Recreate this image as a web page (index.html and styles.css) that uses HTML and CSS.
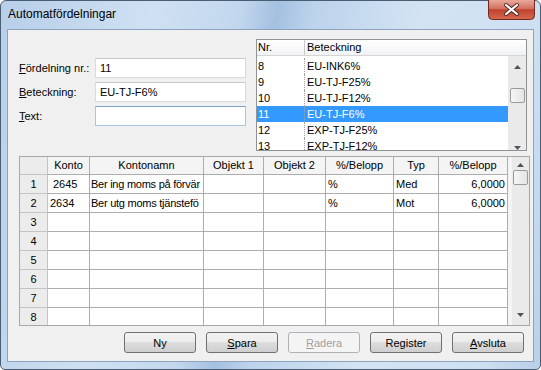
FILE: index.html
```html
<!DOCTYPE html>
<html lang="sv">
<head>
  <meta charset="UTF-8" />
  <title>Automatfördelningar</title>
  <link rel="stylesheet" href="styles.css">
</head>
<body>

  <div class="window">
    <div class="titlebar">
      <span class="title">Automatfördelningar</span>
      <div class="close-btn">
        <svg width="47" height="20" viewBox="0 0 47 20">
          <defs>
            <linearGradient id="red" x1="0" y1="0" x2="0" y2="1">
              <stop offset="0" stop-color="#e9a99b"/>
              <stop offset="0.45" stop-color="#d2705e"/>
              <stop offset="0.5" stop-color="#c0412c"/>
              <stop offset="1" stop-color="#d66a50"/>
            </linearGradient>
          </defs>
          <path d="M0.5 0 V15.5 Q0.5 19.5 4.5 19.5 H42.5 Q46.5 19.5 46.5 15.5 V0" fill="url(#red)" stroke="#6f2a20"/>
          <path d="M18 5 L29 14 M29 5 L18 14" stroke="#4a2420" stroke-width="4" stroke-linecap="round"/>
          <path d="M18 5 L29 14 M29 5 L18 14" stroke="#ffffff" stroke-width="2.2" stroke-linecap="round"/>
        </svg>
      </div>
    </div>

    <div class="client">
      <div class="top">
        <div class="form">
          <div class="field">
            <label><u>F</u>ördelning nr.:</label>
            <div class="input ro">11</div>
          </div>
          <div class="field">
            <label><u>B</u>eteckning:</label>
            <div class="input ro">EU-TJ-F6%</div>
          </div>
          <div class="field">
            <label><u>T</u>ext:</label>
            <div class="input focus"></div>
          </div>
        </div>

        <div class="list">
          <div class="list-head">
            <span class="col-nr">Nr.</span>
            <span class="col-bet">Beteckning</span>
          </div>
          <div class="list-body">
            <div class="list-rows">
              <div class="list-row"><span class="col-nr">8</span><span class="col-bet">EU-INK6%</span></div>
              <div class="list-row"><span class="col-nr">9</span><span class="col-bet">EU-TJ-F25%</span></div>
              <div class="list-row"><span class="col-nr">10</span><span class="col-bet">EU-TJ-F12%</span></div>
              <div class="list-row selected"><span class="col-nr">11</span><span class="col-bet">EU-TJ-F6%</span></div>
              <div class="list-row"><span class="col-nr">12</span><span class="col-bet">EXP-TJ-F25%</span></div>
              <div class="list-row"><span class="col-nr">13</span><span class="col-bet">EXP-TJ-F12%</span></div>
            </div>
            <div class="vscroll list-scroll">
              <svg class="arrow" width="7" height="4" viewBox="0 0 7 4"><polygon points="3.5,0 7,4 0,4" fill="#555"/></svg>
              <div class="thumb"></div>
              <svg class="arrow down" width="7" height="4" viewBox="0 0 7 4"><polygon points="0,0 7,0 3.5,4" fill="#555"/></svg>
            </div>
          </div>
        </div>
      </div>

      <div class="grid">
        <div class="grid-table">
          <div class="cell rh"></div>
          <div class="cell hd">Konto</div>
          <div class="cell hd">Kontonamn</div>
          <div class="cell hd">Objekt 1</div>
          <div class="cell hd">Objekt 2</div>
          <div class="cell hd">%/Belopp</div>
          <div class="cell hd">Typ</div>
          <div class="cell hd">%/Belopp</div>

          <div class="cell rh">1</div>
          <div class="cell indent">2645</div>
          <div class="cell name">Ber ing moms på förvär</div>
          <div class="cell"></div>
          <div class="cell"></div>
          <div class="cell">%</div>
          <div class="cell">Med</div>
          <div class="cell num">6,0000</div>

          <div class="cell rh">2</div>
          <div class="cell">2634</div>
          <div class="cell name">Ber utg moms tjänstefö</div>
          <div class="cell"></div>
          <div class="cell"></div>
          <div class="cell">%</div>
          <div class="cell">Mot</div>
          <div class="cell num">6,0000</div>

          <div class="cell rh">3</div><div class="cell"></div><div class="cell"></div><div class="cell"></div><div class="cell"></div><div class="cell"></div><div class="cell"></div><div class="cell"></div>
          <div class="cell rh">4</div><div class="cell"></div><div class="cell"></div><div class="cell"></div><div class="cell"></div><div class="cell"></div><div class="cell"></div><div class="cell"></div>
          <div class="cell rh">5</div><div class="cell"></div><div class="cell"></div><div class="cell"></div><div class="cell"></div><div class="cell"></div><div class="cell"></div><div class="cell"></div>
          <div class="cell rh">6</div><div class="cell"></div><div class="cell"></div><div class="cell"></div><div class="cell"></div><div class="cell"></div><div class="cell"></div><div class="cell"></div>
          <div class="cell rh">7</div><div class="cell"></div><div class="cell"></div><div class="cell"></div><div class="cell"></div><div class="cell"></div><div class="cell"></div><div class="cell"></div>
          <div class="cell rh">8</div><div class="cell"></div><div class="cell"></div><div class="cell"></div><div class="cell"></div><div class="cell"></div><div class="cell"></div><div class="cell"></div>
        </div>
        <div class="filler"></div>
        <div class="vscroll grid-scroll">
          <svg class="arrow" width="7" height="4" viewBox="0 0 7 4"><polygon points="3.5,0 7,4 0,4" fill="#555"/></svg>
          <div class="thumb"></div>
          <svg class="arrow down" width="7" height="4" viewBox="0 0 7 4"><polygon points="0,0 7,0 3.5,4" fill="#555"/></svg>
        </div>
      </div>

      <div class="buttons">
        <button class="btn">Ny</button>
        <button class="btn"><u>S</u>para</button>
        <button class="btn" disabled><u>R</u>adera</button>
        <button class="btn">Re<u>g</u>ister</button>
        <button class="btn"><u>A</u>vsluta</button>
      </div>
    </div>
  </div>

</body>
</html>
```

FILE: styles.css
```css
* {
  box-sizing: border-box;
}

body {
  margin: 0;
  font-family: 'Liberation Sans', Arial, sans-serif;
  font-size: 11px;
  color: black;
  background: white;
}

.window {
  width: 541px;
  height: 370px;
  display: flex;
  flex-direction: column;
  padding: 0 6px 7px 6px;
  border: 1px solid #4b5d73;
  border-radius: 6px 6px 5px 5px;
  background: linear-gradient(100deg, #b7cfe9 0%, #cfe0f2 25%, #c2d7ee 40%, #a4c0e1 46%, #bcd3ec 52%, #d3e3f3 70%, #cde0f2 90%, #b9d0ea 100%);
}

.titlebar {
  height: 28px;
  display: flex;
  align-items: flex-start;
}

.title {
  font-size: 12px;
  padding-top: 6px;
  padding-left: 1px;
  color: black;
}

.close-btn {
  margin-left: auto;
  margin-top: -1px;
  margin-right: -1px;
  height: 20px;
}

.close-btn svg {
  display: block;
}

.client {
  flex: 1;
  background: #f0f0f0;
  border: 1px solid #8da3bd;
  padding: 9px 0 0 11px;
  display: flex;
  flex-direction: column;
}

.top {
  display: flex;
  height: 112px;
}

.form {
  padding-top: 19px;
  display: flex;
  flex-direction: column;
  gap: 4px;
}

.field {
  display: flex;
  align-items: center;
  height: 20px;
}

.field label {
  width: 76px;
}

.input {
  width: 151px;
  height: 20px;
  line-height: 18px;
  padding: 0 4px;
  background: white;
  border: 1px solid #dadada;
  border-top-color: #c8c8c8;
}

.input.focus {
  border: 1px solid #a9c6e1;
  border-top-color: #7ba2c9;
}

.list {
  margin-left: auto;
  margin-right: 6px;
  width: 271px;
  height: 112px;
  border: 1px solid #8e9399;
  background: white;
  display: flex;
  flex-direction: column;
  overflow: hidden;
}

.list-head {
  height: 16px;
  display: flex;
  background: linear-gradient(#ffffff, #f1f2f4);
  border-bottom: 1px solid #d5d5d5;
  line-height: 15px;
}

.list-head .col-bet {
  border-left: 1px solid #c9c9c9;
}

.col-nr {
  width: 47px;
  padding-left: 1px;
}

.col-bet {
  flex: 1;
  padding-left: 2px;
}

.list-body {
  flex: 1;
  display: flex;
}

.list-rows {
  flex: 1;
  padding-top: 2px;
}

.list-row {
  height: 16px;
  line-height: 16px;
  display: flex;
}

.list-row .col-bet {
  border-left: 1px dotted #a0a0a0;
}

.list-row.selected {
  background: #3399ff;
  color: white;
}

.vscroll {
  width: 18px;
  background: #eaeaea;
  display: flex;
  flex-direction: column;
  align-items: center;
}

.list-scroll {
  padding-top: 9px;
}

.vscroll .arrow {
  display: block;
}

.vscroll .arrow.down {
  margin-top: auto;
  margin-bottom: 4px;
}

.thumb {
  width: 15px;
  height: 15px;
  border: 1px solid #9a9a9a;
  border-radius: 2px;
  background: linear-gradient(to right, #f6f6f6, #e4e4e4);
}

.list-scroll .thumb {
  margin-top: 19px;
}

.grid {
  margin-top: 5px;
  width: 511px;
  height: 170px;
  border: 1px solid #a7a7a7;
  background: white;
  display: flex;
  overflow: hidden;
}

.grid-table {
  display: grid;
  grid-template-columns: 28px 42px 114px 60px 62px 68px 45px 69px;
  grid-template-rows: 18px;
  grid-auto-rows: 19px;
  flex: none;
}

.cell {
  border-right: 1px solid #adadad;
  border-bottom: 1px solid #adadad;
  padding: 0 2px;
  line-height: 18px;
  white-space: nowrap;
  overflow: hidden;
}

.cell.hd {
  background: #f4f4f4;
  text-align: center;
  line-height: 17px;
}

.cell.rh {
  background: #ececec;
  text-align: center;
  border-right-color: #c4c4c4;
  border-bottom-color: #c4c4c4;
}

.cell.indent {
  padding-left: 5px;
}

.cell.name {
  padding-left: 1px;
  padding-right: 0;
  letter-spacing: -0.25px;
}

.cell.num {
  text-align: right;
}

.filler {
  width: 4px;
  background: #f4f4f4;
}

.grid-scroll {
  width: 17px;
  padding-top: 6px;
}

.grid-scroll .thumb {
  margin-top: 3px;
}

.grid-scroll .arrow.down {
  margin-bottom: 8px;
}

.buttons {
  margin-top: 6px;
  padding-right: 9px;
  display: flex;
  justify-content: flex-end;
  gap: 10px;
}

.btn {
  width: 72px;
  height: 21px;
  font-family: 'Liberation Sans', Arial, sans-serif;
  font-size: 11px;
  color: black;
  border: 1px solid #707070;
  border-radius: 3px;
  background: linear-gradient(#f3f3f3 0%, #ebebeb 50%, #dddddd 50%, #cfcfcf 100%);
  padding: 0;
}

.btn:disabled {
  color: #a0a0a0;
  border-color: #adb2b5;
  background: #f4f4f4;
}
```
